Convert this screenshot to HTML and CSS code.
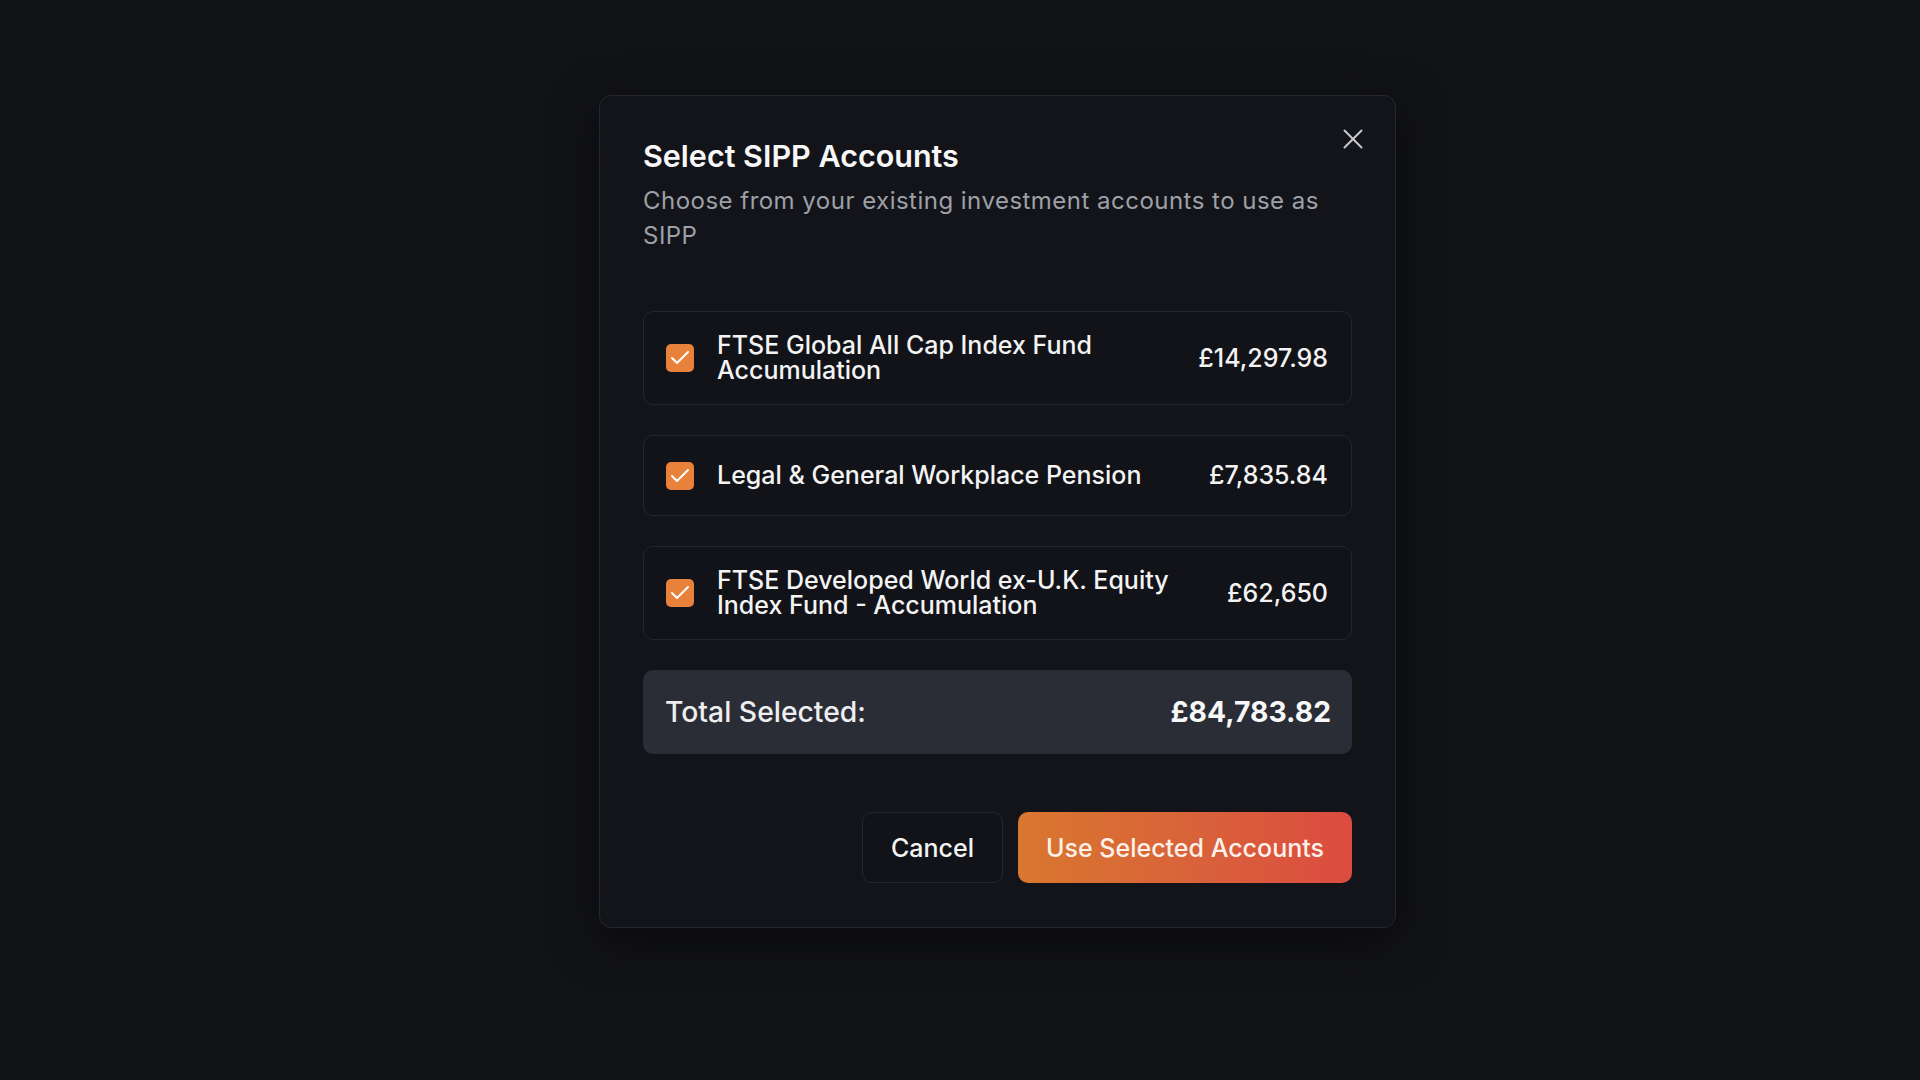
FILE: index.html
```html
<!DOCTYPE html>
<html lang="en">
<head>
<meta charset="utf-8">
<title>Select SIPP Accounts</title>
<link rel="stylesheet" href="styles.css">
</head>
<body>
<div class="stage">
  <div class="modal" role="dialog" aria-labelledby="dlg-title">
    <button class="close" aria-label="Close">
      <svg viewBox="0 0 24 24" width="34" height="34" fill="none" stroke="currentColor" stroke-width="1.4" stroke-linecap="round" stroke-linejoin="round"><path d="M18 6 6 18"/><path d="m6 6 12 12"/></svg>
    </button>
    <h2 class="title" id="dlg-title">Select SIPP Accounts</h2>
    <p class="subtitle">Choose from your existing investment accounts to use as SIPP</p>

    <div class="list">
      <label class="row">
        <span class="check"><svg viewBox="0 0 24 24" width="24" height="24" fill="none" stroke="currentColor" stroke-width="2" stroke-linecap="round" stroke-linejoin="round"><path d="M20 6 9 17l-5-5"/></svg></span>
        <span class="name">FTSE Global All Cap Index Fund Accumulation</span>
        <span class="amount">£14,297.98</span>
      </label>
      <label class="row">
        <span class="check"><svg viewBox="0 0 24 24" width="24" height="24" fill="none" stroke="currentColor" stroke-width="2" stroke-linecap="round" stroke-linejoin="round"><path d="M20 6 9 17l-5-5"/></svg></span>
        <span class="name">Legal &amp; General Workplace Pension</span>
        <span class="amount">£7,835.84</span>
      </label>
      <label class="row">
        <span class="check"><svg viewBox="0 0 24 24" width="24" height="24" fill="none" stroke="currentColor" stroke-width="2" stroke-linecap="round" stroke-linejoin="round"><path d="M20 6 9 17l-5-5"/></svg></span>
        <span class="name">FTSE Developed World ex-U.K. Equity Index Fund - Accumulation</span>
        <span class="amount">£62,650</span>
      </label>
      <div class="total">
        <span class="total-label">Total Selected:</span>
        <span class="total-value">£84,783.82</span>
      </div>
    </div>

    <div class="actions">
      <button class="btn btn-cancel">Cancel</button>
      <button class="btn btn-primary">Use Selected Accounts</button>
    </div>
  </div>
</div>
</body>
</html>
```
FILE: styles.css
```css
* { box-sizing: border-box; }
html, body { margin: 0; padding: 0; }
body {
  background: #121317;
  font-family: Inter, "Noto Sans", sans-serif;
  color: #f2f2f3;
  width: 1920px;
  height: 1080px;
  overflow: hidden;
}
.stage {
  padding: 95px 0 0 599px;
}
.modal {
  position: relative;
  width: 797px;
  background: #131419;
  border: 1px solid #25272d;
  border-radius: 12px;
  padding: 45px 43px 44px 43px;
  box-shadow: 0 12px 48px rgba(0, 0, 0, 0.55);
}
.close {
  position: absolute;
  top: 26px;
  right: 25px;
  background: none;
  border: 0;
  padding: 0;
  color: #c7c8cc;
  display: flex;
  cursor: pointer;
}
.title {
  margin: 0;
  font-size: 30.5px;
  line-height: 30px;
  font-weight: 600;
  color: #f7f7f8;
}
.subtitle {
  margin: 12px 0 0;
  font-size: 24px;
  line-height: 35px;
  letter-spacing: 0.48px;
  color: #9ea0a7;
  font-weight: 400;
}
.list {
  margin-top: 58px;
  display: flex;
  flex-direction: column;
  gap: 30px;
}
.row {
  display: flex;
  align-items: center;
  gap: 23px;
  border: 1px solid #24262c;
  border-radius: 10px;
  padding: 21px 23px 21px 22px;
  background: #121318;
}
.check {
  flex: none;
  width: 28px;
  height: 28px;
  border-radius: 5px;
  background: #e8813a;
  color: #fff;
  display: flex;
  align-items: center;
  justify-content: center;
}
.name {
  flex: 1;
  font-size: 25px;
  line-height: 25px;
  font-weight: 500;
  color: #f3f3f4;
}
.amount {
  flex: none;
  font-size: 25px;
  line-height: 37px;
  font-weight: 500;
  color: #f3f3f4;
}
.total {
  display: flex;
  align-items: center;
  justify-content: space-between;
  height: 84px;
  padding: 0 21px 0 22px;
  background: #2a2d35;
  border-radius: 10px;
}
.total-label {
  font-size: 28.3px;
  font-weight: 500;
  color: #eeeef0;
}
.total-value {
  font-size: 28.3px;
  font-weight: 700;
  color: #f7f7f8;
}
.actions {
  margin-top: 58px;
  display: flex;
  justify-content: flex-end;
  gap: 15px;
}
.btn {
  height: 71px;
  border-radius: 10px;
  font-family: Inter, "Noto Sans", sans-serif;
  font-size: 25px;
  font-weight: 500;
  cursor: pointer;
}
.btn-cancel {
  width: 141px;
  background: #121318;
  border: 1px solid #25272d;
  color: #f3f3f4;
}
.btn-primary {
  width: 334px;
  border: 0;
  color: #fdf1ea;
  background: linear-gradient(90deg, #d9772f 0%, #d9613a 55%, #dc4b40 100%);
}
```
